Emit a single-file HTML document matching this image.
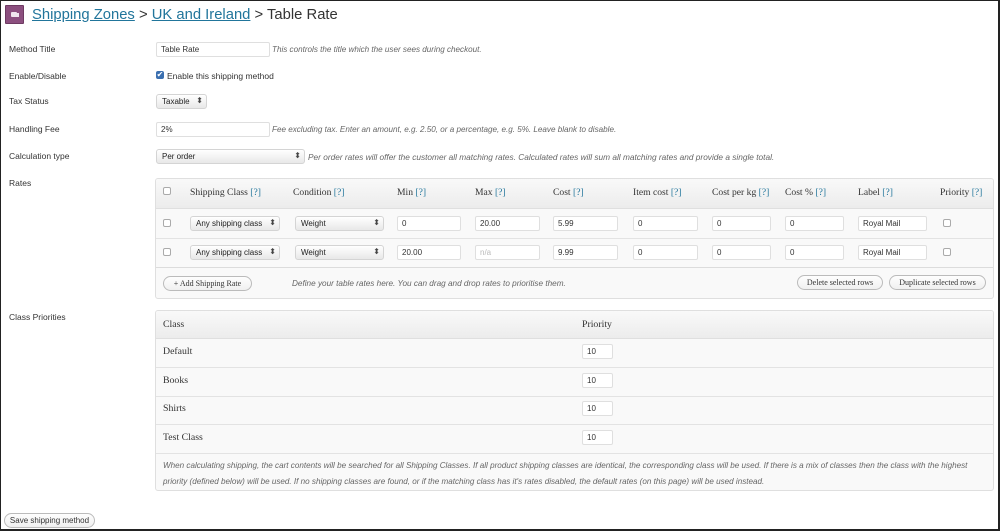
<!DOCTYPE html>
<html><head><style>
*{box-sizing:border-box;margin:0;padding:0}
body{width:1000px;height:531px;background:#fff;position:relative;overflow:hidden;font-family:"Liberation Sans",sans-serif;font-size:8.5px;color:#333}
.frame{position:absolute;left:0;top:0;width:1000px;height:531px;border:1px solid #222;border-right:2px solid #222;border-bottom:2px solid #222}
.a{position:absolute;white-space:nowrap}
.lbl{position:absolute;left:9px;font-size:8.5px;color:#333}
.inp{position:absolute;height:15px;border:1px solid #dfdfdf;background:#fff;border-radius:2px;font-size:8px;padding:3px 4px;line-height:8px;color:#333;white-space:nowrap}
.sel{position:absolute;height:15px;border:1px solid #d4d4d4;border-radius:3px;background:linear-gradient(#fff,#e8e8e8);font-size:8px;padding:3px 5px;line-height:8px;white-space:nowrap;color:#222}
.sel:after{content:"⬍";position:absolute;right:3px;top:2px;font-size:8px;color:#444}
.desc{position:absolute;font-style:italic;font-size:8.1px;color:#666;white-space:nowrap}
.cb{position:absolute;width:8px;height:8px;border:1px solid #aaa;border-radius:2px;background:#fff}
.box{position:absolute;left:155px;width:839px;border:1px solid #dfdfdf;border-radius:3px;background:#f9f9f9;overflow:hidden}
.serif{font-family:"Liberation Serif",serif;color:#333}
.q{color:#21759b}
.btn{position:absolute;height:15px;border:1px solid #bbb;border-radius:8px;background:linear-gradient(#fefefe,#f0f0f0);font-size:8px;line-height:13px;text-align:center;white-space:nowrap;color:#333}
.hr{position:absolute;left:0;right:0;height:1px;background:#e3e3e3}
.h{font-size:9.6px}
</style></head><body>
<div class="a" style="left:5px;top:5px;width:19px;height:19px;background:#8c4f7f;border:1px solid #6e3a62;border-radius:1px"></div>
<div class="a" style="left:11px;top:12px;width:6px;height:5px;background:#f0e6ee;border-radius:1px"></div>
<div class="a" style="left:16px;top:13px;width:3px;height:4px;background:#f0e6ee"></div>
<div class="a" style="left:32px;top:5px;font-size:14.8px;color:#333;line-height:20px"><span style="color:#21759b;text-decoration:underline">Shipping Zones</span> &gt; <span style="color:#21759b;text-decoration:underline">UK and Ireland</span> &gt; Table Rate</div>

<div class="lbl" style="top:44px">Method Title</div>
<div class="inp" style="left:156px;top:42px;width:114px">Table Rate</div>
<div class="desc" style="left:272px;top:45px">This controls the title which the user sees during checkout.</div>

<div class="lbl" style="top:71px">Enable/Disable</div>
<div class="a" style="left:156px;top:71px;width:8px;height:8px;background:#3a6fb0;border-radius:2px;color:#fff;font-size:8px;line-height:8px;text-align:center">✔</div>
<div class="a" style="left:167px;top:71px;font-size:8.5px">Enable this shipping method</div>

<div class="lbl" style="top:96px">Tax Status</div>
<div class="sel" style="left:156px;top:94px;width:51px">Taxable</div>

<div class="lbl" style="top:124px">Handling Fee</div>
<div class="inp" style="left:156px;top:122px;width:114px">2%</div>
<div class="desc" style="left:272px;top:125px">Fee excluding tax. Enter an amount, e.g. 2.50, or a percentage, e.g. 5%. Leave blank to disable.</div>

<div class="lbl" style="top:151px">Calculation type</div>
<div class="sel" style="left:156px;top:149px;width:149px">Per order</div>
<div class="desc" style="left:308px;top:152px;font-size:8.3px">Per order rates will offer the customer all matching rates. Calculated rates will sum all matching rates and provide a single total.</div>

<div class="lbl" style="top:178px">Rates</div>
<div class="box" style="top:178px;height:121px">
  <div style="position:absolute;left:0;right:0;top:0;height:30px;background:linear-gradient(#f9f9f9,#ececec);border-bottom:1px solid #dfdfdf"></div>
  <div class="hr" style="top:59px"></div>
  <div class="hr" style="top:88px;background:#dcdcdc"></div>
</div>
<div class="cb" style="left:163px;top:187px"></div>
<div class="a serif h" style="top:187px;left:190px">Shipping Class <span class="q">[?]</span></div>
<div class="a serif h" style="top:187px;left:293px">Condition <span class="q">[?]</span></div>
<div class="a serif h" style="top:187px;left:397px">Min <span class="q">[?]</span></div>
<div class="a serif h" style="top:187px;left:475px">Max <span class="q">[?]</span></div>
<div class="a serif h" style="top:187px;left:553px">Cost <span class="q">[?]</span></div>
<div class="a serif h" style="top:187px;left:633px">Item cost <span class="q">[?]</span></div>
<div class="a serif h" style="top:187px;left:712px">Cost per kg <span class="q">[?]</span></div>
<div class="a serif h" style="top:187px;left:785px">Cost % <span class="q">[?]</span></div>
<div class="a serif h" style="top:187px;left:858px">Label <span class="q">[?]</span></div>
<div class="a serif h" style="top:187px;left:940px">Priority <span class="q">[?]</span></div>

<div class="cb" style="left:163px;top:219px"></div>
<div class="sel" style="left:190px;top:216px;width:90px">Any shipping class</div>
<div class="sel" style="left:295px;top:216px;width:89px">Weight</div>
<div class="inp" style="left:397px;top:216px;width:64px">0</div>
<div class="inp" style="left:475px;top:216px;width:65px">20.00</div>
<div class="inp" style="left:553px;top:216px;width:65px">5.99</div>
<div class="inp" style="left:633px;top:216px;width:65px">0</div>
<div class="inp" style="left:712px;top:216px;width:59px">0</div>
<div class="inp" style="left:785px;top:216px;width:59px">0</div>
<div class="inp" style="left:858px;top:216px;width:69px">Royal Mail</div>
<div class="cb" style="left:943px;top:219px"></div>

<div class="cb" style="left:163px;top:248px"></div>
<div class="sel" style="left:190px;top:245px;width:90px">Any shipping class</div>
<div class="sel" style="left:295px;top:245px;width:89px">Weight</div>
<div class="inp" style="left:397px;top:245px;width:64px">20.00</div>
<div class="inp" style="left:475px;top:245px;width:65px;color:#bbb">n/a</div>
<div class="inp" style="left:553px;top:245px;width:65px">9.99</div>
<div class="inp" style="left:633px;top:245px;width:65px">0</div>
<div class="inp" style="left:712px;top:245px;width:59px">0</div>
<div class="inp" style="left:785px;top:245px;width:59px">0</div>
<div class="inp" style="left:858px;top:245px;width:69px">Royal Mail</div>
<div class="cb" style="left:943px;top:248px"></div>

<div class="btn serif" style="left:163px;top:276px;width:89px">+ Add Shipping Rate</div>
<div class="desc" style="left:292px;top:279px;font-size:8.2px">Define your table rates here. You can drag and drop rates to prioritise them.</div>
<div class="btn serif" style="left:797px;top:275px;width:86px">Delete selected rows</div>
<div class="btn serif" style="left:889px;top:275px;width:97px">Duplicate selected rows</div>

<div class="lbl" style="top:312px">Class Priorities</div>
<div class="box" style="top:310px;height:181px">
  <div style="position:absolute;left:0;right:0;top:0;height:28px;background:linear-gradient(#f9f9f9,#ececec);border-bottom:1px solid #dfdfdf"></div>
  <div class="hr" style="top:56px"></div>
  <div class="hr" style="top:85px"></div>
  <div class="hr" style="top:113px"></div>
  <div class="hr" style="top:142px"></div>
</div>
<div class="a serif" style="left:163px;top:319px;font-size:9.8px">Class</div>
<div class="a serif" style="left:582px;top:319px;font-size:9.8px">Priority</div>
<div class="a serif" style="left:163px;top:346px;font-size:9.8px">Default</div>
<div class="a serif" style="left:163px;top:375px;font-size:9.8px">Books</div>
<div class="a serif" style="left:163px;top:403px;font-size:9.8px">Shirts</div>
<div class="a serif" style="left:163px;top:432px;font-size:9.8px">Test Class</div>
<div class="inp" style="left:582px;top:344px;width:31px">10</div>
<div class="inp" style="left:582px;top:373px;width:31px">10</div>
<div class="inp" style="left:582px;top:401px;width:31px">10</div>
<div class="inp" style="left:582px;top:430px;width:31px">10</div>
<div class="desc" style="left:163px;top:458px;line-height:16px;font-size:8.1px">When calculating shipping, the cart contents will be searched for all Shipping Classes. If all product shipping classes are identical, the corresponding class will be used. If there is a mix of classes then the class with the highest<br>priority (defined below) will be used. If no shipping classes are found, or if the matching class has it's rates disabled, the default rates (on this page) will be used instead.</div>

<div class="btn" style="left:4px;top:513px;width:91px;font-size:8px">Save shipping method</div>
<div class="frame"></div>
</body></html>
